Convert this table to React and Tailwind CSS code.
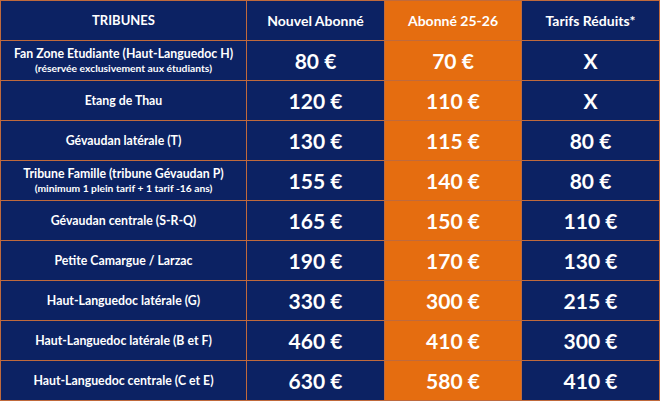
import React from 'react';

const rows = [
  { name: 'Fan Zone Etudiante (Haut-Languedoc H)', sub: '(réservée exclusivement aux étudiants)', nouvel: '80 €', abonne: '70 €', reduit: 'X' },
  { name: 'Etang de Thau', nouvel: '120 €', abonne: '110 €', reduit: 'X' },
  { name: 'Gévaudan latérale (T)', nouvel: '130 €', abonne: '115 €', reduit: '80 €' },
  { name: 'Tribune Famille (tribune Gévaudan P)', sub: '(minimum 1 plein tarif + 1 tarif -16 ans)', nouvel: '155 €', abonne: '140 €', reduit: '80 €' },
  { name: 'Gévaudan centrale (S-R-Q)', nouvel: '165 €', abonne: '150 €', reduit: '110 €' },
  { name: 'Petite Camargue / Larzac', nouvel: '190 €', abonne: '170 €', reduit: '130 €' },
  { name: 'Haut-Languedoc latérale (G)', nouvel: '330 €', abonne: '300 €', reduit: '215 €' },
  { name: 'Haut-Languedoc latérale (B et F)', nouvel: '460 €', abonne: '410 €', reduit: '300 €' },
  { name: 'Haut-Languedoc centrale (C et E)', nouvel: '630 €', abonne: '580 €', reduit: '410 €' },
];

const navy = 'bg-[#0c2263]';
const orange = 'bg-[#e56d10]';

const App = () => {
  return (
    <div className="w-[660px] h-[401px] bg-[#c06a3c] p-px font-['Lato',sans-serif] font-bold text-white">
      <div className="grid grid-cols-[245px_137px_136px_137px] grid-rows-[repeat(10,39px)] gap-px">
        <div className={`${navy} flex items-center justify-center text-[13px]`}>TRIBUNES</div>
        <div className={`${navy} flex items-center justify-center text-[14px]`}>Nouvel Abonné</div>
        <div className={`${orange} flex items-center justify-center text-[14px]`}>Abonné 25-26</div>
        <div className={`${navy} flex items-center justify-center text-[14px]`}>Tarifs Réduits*</div>
        {rows.map((r) => (
          <React.Fragment key={r.name}>
            <div className={`${navy} flex flex-col items-center justify-center leading-[1.3]`}>
              <span className="text-[12.3px]">{r.name}</span>
              {r.sub && <span className="text-[10.3px]">{r.sub}</span>}
            </div>
            <div className={`${navy} flex items-center justify-center text-[21px]`}>{r.nouvel}</div>
            <div className={`${orange} flex items-center justify-center text-[21px]`}>{r.abonne}</div>
            <div className={`${navy} flex items-center justify-center text-[21px]`}>{r.reduit}</div>
          </React.Fragment>
        ))}
      </div>
    </div>
  );
};

export default App;
